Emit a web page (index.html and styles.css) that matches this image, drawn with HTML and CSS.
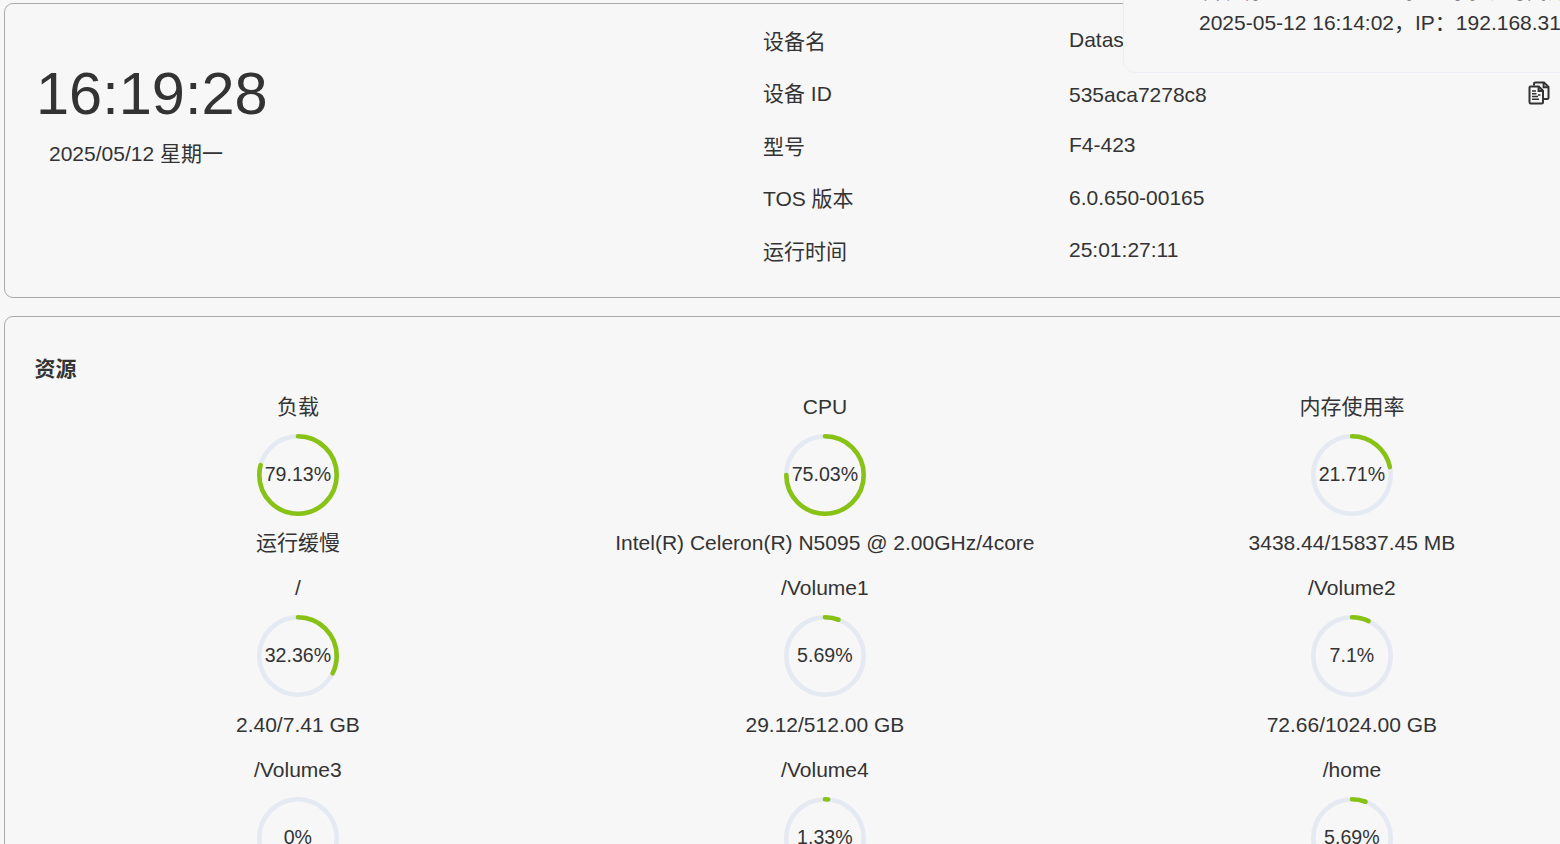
FILE: index.html
```
<!DOCTYPE html>
<html lang="zh-CN">
<head>
  <meta charset="UTF-8">
  <title>系统概览</title>
  <link rel="stylesheet" href="styles.css">
</head>
<body>
  <!-- Device info -->
  <div class="card device">
    <div class="clock">
      <div class="time">16:19:28</div>
      <div class="date">2025/05/12 星期一</div>
    </div>
    <div class="info">
      <div class="label">设备名</div>
      <div class="value">Datas</div>
      <div class="label">设备 ID</div>
      <div class="value copyable">
        <span>535aca7278c8</span>
        <svg class="copy" viewBox="0 0 22 24">
          <path d="M6 4.5V2.8Q6 1.5 7.3 1.5H16L20.5 6V16.7Q20.5 18 19.2 18H16"/>
          <path d="M15.6 1.8V6.2H20.2"/>
          <path d="M2.5 5.5H10.8L15 9.7V21Q15 22.5 13.5 22.5H2.8Q1.5 22.5 1.5 21V6.5Q1.5 5.5 2.5 5.5Z"/>
          <path d="M10.6 5.8V10H14.8"/>
          <path class="thin" d="M4 10H8M4 12.7H8.5M10 14H12.5M4 15.5H10M4 18.2H11"/>
        </svg>
      </div>
      <div class="label">型号</div>
      <div class="value">F4-423</div>
      <div class="label">TOS 版本</div>
      <div class="value">6.0.650-00165</div>
      <div class="label">运行时间</div>
      <div class="value">25:01:27:11</div>
    </div>
  </div>

  <!-- Resources -->
  <div class="card resources">
    <h3>资源</h3>
    <div class="grid">
      <div class="item">
        <div class="name">负载</div>
        <div class="ring">
          <svg viewBox="0 0 82 82"><circle class="track" cx="41" cy="41" r="38.7"/><circle class="bar" cx="41" cy="41" r="38.7" pathLength="100" stroke-dasharray="79.13 100"/></svg>
          <span>79.13%</span>
        </div>
        <div class="detail">运行缓慢</div>
      </div>
      <div class="item">
        <div class="name">CPU</div>
        <div class="ring">
          <svg viewBox="0 0 82 82"><circle class="track" cx="41" cy="41" r="38.7"/><circle class="bar" cx="41" cy="41" r="38.7" pathLength="100" stroke-dasharray="75.03 100"/></svg>
          <span>75.03%</span>
        </div>
        <div class="detail">Intel(R) Celeron(R) N5095 @ 2.00GHz/4core</div>
      </div>
      <div class="item">
        <div class="name">内存使用率</div>
        <div class="ring">
          <svg viewBox="0 0 82 82"><circle class="track" cx="41" cy="41" r="38.7"/><circle class="bar" cx="41" cy="41" r="38.7" pathLength="100" stroke-dasharray="21.71 100"/></svg>
          <span>21.71%</span>
        </div>
        <div class="detail">3438.44/15837.45 MB</div>
      </div>
      <div class="item">
        <div class="name">/</div>
        <div class="ring">
          <svg viewBox="0 0 82 82"><circle class="track" cx="41" cy="41" r="38.7"/><circle class="bar" cx="41" cy="41" r="38.7" pathLength="100" stroke-dasharray="32.36 100"/></svg>
          <span>32.36%</span>
        </div>
        <div class="detail">2.40/7.41 GB</div>
      </div>
      <div class="item">
        <div class="name">/Volume1</div>
        <div class="ring">
          <svg viewBox="0 0 82 82"><circle class="track" cx="41" cy="41" r="38.7"/><circle class="bar" cx="41" cy="41" r="38.7" pathLength="100" stroke-dasharray="5.69 100"/></svg>
          <span>5.69%</span>
        </div>
        <div class="detail">29.12/512.00 GB</div>
      </div>
      <div class="item">
        <div class="name">/Volume2</div>
        <div class="ring">
          <svg viewBox="0 0 82 82"><circle class="track" cx="41" cy="41" r="38.7"/><circle class="bar" cx="41" cy="41" r="38.7" pathLength="100" stroke-dasharray="7.1 100"/></svg>
          <span>7.1%</span>
        </div>
        <div class="detail">72.66/1024.00 GB</div>
      </div>
      <div class="item">
        <div class="name">/Volume3</div>
        <div class="ring">
          <svg viewBox="0 0 82 82"><circle class="track" cx="41" cy="41" r="38.7"/></svg>
          <span>0%</span>
        </div>
      </div>
      <div class="item">
        <div class="name">/Volume4</div>
        <div class="ring">
          <svg viewBox="0 0 82 82"><circle class="track" cx="41" cy="41" r="38.7"/><circle class="bar" cx="41" cy="41" r="38.7" pathLength="100" stroke-dasharray="1.33 100"/></svg>
          <span>1.33%</span>
        </div>
      </div>
      <div class="item">
        <div class="name">/home</div>
        <div class="ring">
          <svg viewBox="0 0 82 82"><circle class="track" cx="41" cy="41" r="38.7"/><circle class="bar" cx="41" cy="41" r="38.7" pathLength="100" stroke-dasharray="5.69 100"/></svg>
          <span>5.69%</span>
        </div>
      </div>
    </div>
  </div>

  <!-- Notification over the page -->
  <div class="notice">
    <div>发现有人通过 Web 登录您的系统时间为</div>
    <div>2025-05-12 16:14:02，IP：192.168.31</div>
  </div>
</body>
</html>
```
FILE: styles.css
```
* {
  box-sizing: border-box;
}

body {
  margin: 0;
  padding: 3px 0 0 4px;
  height: 844px;
  overflow: hidden;
  position: relative;
  background: #f7f7f7;
  color: #333;
  font-family: "Liberation Sans", "Noto Sans CJK SC", sans-serif;
  font-size: 21px;
  line-height: 31.5px;
}

.card {
  width: 1642px;
  border: 1px solid #aaa;
  border-radius: 9px;
}

.device {
  display: flex;
  height: 295px;
  margin-bottom: 18px;
}

.clock {
  width: 758px;
  padding: 45px 0 0 31px;
}

.time {
  font-size: 59.5px;
  line-height: 89px;
}

.date {
  padding-left: 13px;
}

.info {
  display: grid;
  grid-template-columns: 306px 481px;
  grid-auto-rows: 52.4px;
  padding-top: 20.4px;
}

.label {
  padding-top: 1.6px;
}

.copyable {
  display: flex;
  justify-content: space-between;
  align-items: flex-start;
  padding-top: 2.6px;
}

.copy {
  width: 22px;
  height: 24px;
  margin-top: 2px;
}

.copy path {
  fill: none;
  stroke: #333;
  stroke-width: 2;
}

.copy .thin {
  stroke-width: 1.6;
}

.resources {
  height: 760px;
  padding: 36px 0 0 29.4px;
}

h3 {
  margin: 0;
  font-size: 21px;
}

.grid {
  display: grid;
  grid-template-columns: repeat(3, 527px);
  grid-auto-rows: 168px;
  row-gap: 13.5px;
  padding-top: 6px;
}

.item {
  display: flex;
  flex-direction: column;
  align-items: center;
  gap: 11.5px;
}

.ring {
  display: grid;
  place-items: center;
  width: 82px;
  height: 82px;
  font-size: 19.6px;
}

.ring svg,
.ring span {
  grid-area: 1 / 1;
}

.ring svg {
  width: 82px;
  height: 82px;
}

.ring circle {
  fill: none;
  stroke-width: 4.6;
}

.track {
  stroke: #e5e9f2;
}

.bar {
  stroke: #87c214;
  stroke-linecap: round;
  transform: rotate(-90deg);
  transform-origin: center;
}

.notice {
  position: absolute;
  top: -60px;
  right: -30px;
  width: 467px;
  height: 133px;
  padding: 34px 0 0 75px;
  border: 1px solid #ebeef5;
  border-radius: 12px;
  background: #f7f7f7;
  white-space: nowrap;
}
```
